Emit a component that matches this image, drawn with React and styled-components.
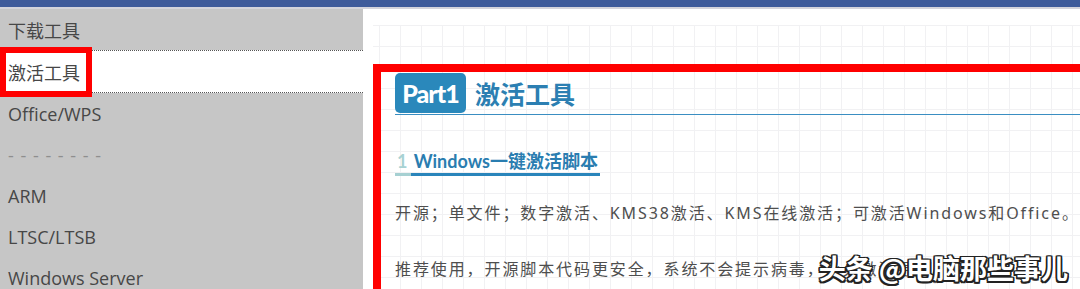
import React from "react";
import styled, { createGlobalStyle } from "styled-components";

const navItems = [
    { label: "下载工具" },
    { label: "激活工具", active: true },
    { label: "Office/WPS" },
    { label: "- - - - - - - -", divider: true },
    { label: "ARM" },
    { label: "LTSC/LTSB" },
    { label: "Windows Server" },
];

const App = () => {
    return (
        <Page>
            <GlobalStyle />
            <TopBar />
            <Main>
                <Sidebar>
                    {navItems.map((item) => (
                        <NavItem key={item.label} $active={item.active} $divider={item.divider}>
                            {item.label}
                            {item.active && <Marker />}
                        </NavItem>
                    ))}
                </Sidebar>
                <Content>
                    <Grid>
                        <Article>
                            <PartRow>
                                <PartBadge>Part1</PartBadge>
                                <PartTitle>激活工具</PartTitle>
                            </PartRow>
                            <Heading>
                                <HeadingNum>1</HeadingNum> Windows一键激活脚本
                            </Heading>
                            <Paragraph>开源；单文件；数字激活、KMS38激活、KMS在线激活；可激活Windows和Office。</Paragraph>
                            <Paragraph>推荐使用，开源脚本代码更安全，系统不会提示病毒，永久激活更省心。</Paragraph>
                        </Article>
                    </Grid>
                </Content>
            </Main>
            <Watermark>头条 @电脑那些事儿</Watermark>
        </Page>
    );
};

export default App;

const GlobalStyle = createGlobalStyle`
body {
    margin: 0;
    overflow: hidden;
    background: #ffffff;
}
`;

const Page = styled.div`
position: relative;
width: 1080px;
height: 289px;
display: flex;
flex-direction: column;
overflow: hidden;
font-family: "Open Sans", "Noto Sans CJK SC", sans-serif;
`;

const TopBar = styled.div`
height: 7px;
background: #3e5b9b;
border-bottom: 2px solid #d4d4dc;
flex-shrink: 0;
`;

const Main = styled.div`
flex: 1;
display: flex;
min-height: 0;
`;

const Sidebar = styled.div`
width: 363px;
background: #c6c6c6;
display: flex;
flex-direction: column;
flex-shrink: 0;
`;

const NavItem = styled.div`
position: relative;
height: 41px;
flex-shrink: 0;
display: flex;
align-items: center;
padding-left: 8px;
font-size: 18px;
color: ${(p) => (p.$divider ? "#8e8e8e" : "#474747")};
letter-spacing: ${(p) => (p.$divider ? "1px" : "0")};
background: ${(p) => (p.$active ? "#ffffff" : "transparent")};
border-top: ${(p) => (p.$active ? "1px dotted #555" : "none")};
border-bottom: ${(p) => (p.$active ? "1px dotted #555" : "none")};
`;

const Marker = styled.span`
position: absolute;
left: 0;
top: -4px;
width: 92px;
height: 50px;
box-sizing: border-box;
border: 6px solid #ff0000;
pointer-events: none;
`;

const Content = styled.div`
flex: 1;
background: #ffffff;
padding: 16px 0 0 10px;
display: flex;
min-width: 0;
`;

const Grid = styled.div`
flex: 1;
background-color: #ffffff;
background-image:
    linear-gradient(to right, #f1f1f3 1px, transparent 1px),
    linear-gradient(to bottom, #f1f1f3 1px, transparent 1px);
background-size: 21px 21px;
background-position: 6px 0;
padding-top: 39px;
`;

const Article = styled.div`
border: 8px solid #ff0000;
border-bottom: none;
height: 100%;
box-sizing: border-box;
padding: 1px 0 0 14px;
overflow: hidden;
`;

const PartRow = styled.div`
display: flex;
align-items: flex-start;
gap: 9px;
height: 42px;
border-bottom: 1px solid #3a8ec2;
box-sizing: border-box;
`;

const PartBadge = styled.div`
width: 71px;
height: 40px;
border-radius: 5px;
background: #2a88bb;
color: #ffffff;
font-family: "Lato", "Open Sans", sans-serif;
font-weight: 900;
font-size: 25px;
letter-spacing: -1px;
display: flex;
align-items: center;
justify-content: center;
`;

const PartTitle = styled.div`
height: 40px;
display: flex;
align-items: center;
font-family: "Noto Sans CJK SC", sans-serif;
font-weight: 700;
font-size: 25px;
color: #2c7fb2;
`;

const Heading = styled.div`
display: inline-block;
margin-top: 34px;
padding: 0 2px 3px 2px;
font-family: "Lato", "Noto Sans CJK SC", sans-serif;
font-weight: 700;
font-size: 18px;
line-height: 24px;
color: #2a7db0;
background-image: linear-gradient(to right, #a6d0d2 16px, #2a85bb 16px);
background-size: 100% 3px;
background-position: bottom left;
background-repeat: no-repeat;
`;

const HeadingNum = styled.span`
color: #a8d2d3;
margin-right: 2px;
`;

const Paragraph = styled.p`
margin: 23px 0 0 0;
font-family: "Noto Sans", "Noto Sans CJK SC", sans-serif;
font-size: 16px;
line-height: 28px;
letter-spacing: 1.9px;
color: #4e4e4e;
white-space: nowrap;
& + & {
    margin-top: 28px;
}
`;

const Watermark = styled.div`
position: absolute;
right: 12px;
bottom: 2px;
font-family: "Noto Sans CJK SC", sans-serif;
font-size: 27px;
font-weight: 700;
color: #ffffff;
white-space: nowrap;
text-shadow:
    -1.5px -1.5px 0 #222, 1.5px -1.5px 0 #222, -1.5px 1.5px 0 #222, 1.5px 1.5px 0 #222,
    0 -1.5px 0 #222, 0 1.5px 0 #222, -1.5px 0 0 #222, 1.5px 0 0 #222;
`;
